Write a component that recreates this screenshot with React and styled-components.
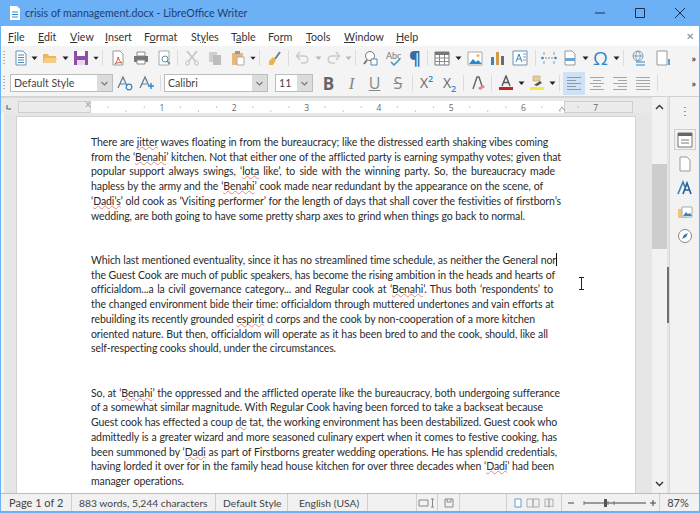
import React from 'react';
import styled, { createGlobalStyle } from 'styled-components';

const Global = createGlobalStyle`
  html, body { margin: 0; padding: 0; }
  body { width: 700px; height: 513px; overflow: hidden; background: #6cb0f5; }
`;

const Window = styled.div`
  position: relative;
  width: 700px; height: 513px; box-sizing: border-box;
  padding: 0 1px 2px 1px;
  background: #6cb0f5;
  display: flex; flex-direction: column;
  font-family: Lato, "Liberation Sans", sans-serif;
  overflow: hidden;
`;
const TitleBar = styled.div`
  height: 26px; flex: none;
  display: flex; align-items: center;
  margin: 0 -1px; padding-left: 10px;
`;
const TitleText = styled.div`
  margin-left: 5px; font-size: 10.6px; color: #1c3f6e; flex: 1;
`;
const WinBtn = styled.div`
  width: 40px; height: 26px; display: flex; align-items: center; justify-content: center;
`;
const MenuBar = styled.div`
  height: 20px; flex: none; background: #fff;
  display: flex; align-items: center; padding-left: 7px;
  font-size: 10.7px; color: #333;
`;
const MenuItem = styled.div`
  width: ${p => p.$w}px; flex: none;
  u { text-underline-offset: 1px; }
`;
const MenuClose = styled.div`
  margin-left: auto; margin-right: 5px; color: #8a8a8a; font-size: 10px;
`;
const ToolRow = styled.div`
  height: ${p => p.$h}px; flex: none; background: #f4f4f4;
  display: flex; align-items: center;
  border-bottom: ${p => p.$line ? '1px solid #d2d2d2' : 'none'};
  box-sizing: border-box;
`;
const Grip = styled.div`
  width: 2px; height: 15px; margin: 0 ${p => p.$r}px 0 2px; flex: none;
  background: repeating-linear-gradient(to bottom, #b5b5b5 0 1px, transparent 1px 3px);
`;
const Tool = styled.div`
  width: ${p => p.$w}px; height: ${p => p.$on ? 23 : 22}px; flex: none;
  display: flex; align-items: center; justify-content: center;
  background: ${p => p.$on ? '#cfe2f5' : 'transparent'};
  color: #555;
  font-size: 10px;
`;
const Sep = styled.div`
  width: 1px; height: 16px; flex: none; margin: 0 ${p => p.$m ?? 5}px; background: #dcdcdc;
`;
const More = styled.div`
  margin-left: auto; margin-right: 3px; font-size: 10px; color: #444; font-weight: 700;
`;
const Combo = styled.div`
  width: ${p => p.$w}px; height: 18px; flex: none; box-sizing: border-box;
  margin-right: ${p => p.$mr}px;
  background: #fff; border: 1px solid #bdbdbd;
  display: flex; align-items: center; justify-content: space-between;
  font-size: 10.6px; color: #444; padding-left: 3px;
`;
const ComboArrow = styled.div`
  width: 15px; height: 16px; background: #dcdcdc;
  display: flex; align-items: center; justify-content: center;
`;
const BigLetter = styled.span`
  font-family: ${p => p.$serif ? '"Liberation Serif", serif' : '"Open Sans", sans-serif'};
  font-size: ${p => p.$size || 16}px;
  font-weight: ${p => p.$bold ? 700 : 400};
  font-style: ${p => p.$italic ? 'italic' : 'normal'};
  text-decoration: ${p => p.$deco || 'none'};
  color: ${p => p.$color || '#666'};
  line-height: 1;
  sup, sub { font-size: 9px; color: #2f86c9; line-height: 0; font-weight: 600; }
`;
const RulerRow = styled.div`
  height: 16px; flex: none; background: #e9e9e9;
  display: flex; align-items: center;
  border-top: 1px solid #d8d8d8; box-sizing: border-box;
`;
const Main = styled.div`
  flex: 1; min-height: 0; display: flex;
`;
const DocColumn = styled.div`
  width: 651px; flex: none; display: flex; flex-direction: column; min-height: 0; background: #f4f4f4;
`;
const Workspace = styled.div`
  flex: 1; min-height: 0; background: #e6e6e6; overflow: hidden;
  padding: 4px 17px 0 13px;
  margin-left: 3px;
`;
const Page = styled.div`
  background: #fff; height: 500px; box-sizing: border-box;
  padding: 18px 0 0 74px; box-shadow: 0 0 0 1px #d4d4d4;
  font-size: 10.5px; letter-spacing: -0.1px; line-height: 14.7px; color: #2b2b2b;
`;
const Para = styled.div`
  margin-bottom: 29.8px;
`;
const Line = styled.div`
  white-space: nowrap;
  width: ${p => p.$w}px;
  text-align: justify; text-align-last: justify;
`;
const Wavy = styled.span`
  text-decoration: underline wavy #e08a8a 0.5px;
  text-decoration-skip-ink: none;
  text-underline-offset: 0;
`;
const Caret = styled.span`
  display: inline-block; width: 1px; height: 13px; background: #111;
  vertical-align: -2px; margin-left: 0;
`;
const IBeam = styled.div`
  position: absolute; left: 578px; top: 274px;
`;
const ScrollCol = styled.div`
  width: 15px; flex: none; background: #f2f2f2;
  display: flex; flex-direction: column; align-items: stretch;
`;
const ScrollBtn = styled.div`
  height: 19px; flex: none; display: flex; align-items: center; justify-content: center;
`;
const ScrollTrack = styled.div`
  flex: 1; padding-top: 48px;
`;
const ScrollThumb = styled.div`
  height: 85px; background: #cdcdcd;
`;
const SideGrab = styled.div`
  width: 2px; flex: none; background: #e4e4e4;
  display: flex; align-items: center;
`;
const SideHandle = styled.div`
  width: 2px; height: 56px; background: #707070;
`;
const Sidebar = styled.div`
  flex: 1; background: #f2f2f2;
  display: flex; flex-direction: column; align-items: center;
  padding-top: 10px; gap: 3px;
  border-left: 1px solid #d8d8d8;
`;
const SideGrip = styled.div`
  width: 2px; height: 11px; margin-bottom: 8px;
  background: repeating-linear-gradient(to bottom, #9a9a9a 0 1px, transparent 1px 4px);
`;
const SideBtn = styled.div`
  width: 22px; height: 21px; box-sizing: border-box;
  display: flex; align-items: center; justify-content: center;
  border: ${p => p.$on ? '1px solid #cfcfcf' : '1px solid transparent'};
`;
const StatusBar = styled.div`
  height: 17px; flex: none; background: #f1f1f1; margin-top: auto;
  display: flex; align-items: center;
  border-top: 1px solid #bdbdbd;
  font-size: 10.3px; color: #444;
`;
const StatusCell = styled.div`
  width: ${p => p.$w}px; flex: none; height: 100%; box-sizing: border-box;
  display: flex; align-items: center; justify-content: ${p => p.$center ? 'center' : 'flex-start'};
  padding-left: ${p => p.$center ? 0 : p.$pl ?? 8}px;
  font-size: ${p => p.$fs ? `${p.$fs}px` : 'inherit'};
  border-right: ${p => p.$last ? 'none' : '1px solid #d0d0d0'};
  white-space: nowrap;
`;

const Svg = ({ children, w = 16, h = 16, vb }) => (
  <svg width={w} height={h} viewBox={vb || `0 0 ${w} ${h}`} fill="none">{children}</svg>
);
const Down = ({ c = '#222' }) => <Svg w={7} h={4}><path d="M0.5 0.5h6L3.5 4z" fill={c} /></Svg>;
const Chev = ({ up }) => (
  <Svg w={9} h={6}><path d={up ? 'M1 5l3.5-3.5L8 5' : 'M1 1l3.5 3.500L8 1'} stroke="#333" strokeWidth="1.4" /></Svg>
);
const ComboChev = () => (
  <Svg w={7} h={5}><path d="M0.5 1l3 3 3-3" stroke="#777" strokeWidth="1.1" /></Svg>
);

const icons = {
  newDoc: <Svg><path d="M3 1h7l3 3v11H3z" fill="#fff" stroke="#6b93b5" /><path d="M5 5h6M5 7.5h6M5 10h6M5 12.5h6" stroke="#4a89b8" /></Svg>,
  open: <Svg><path d="M1 13V4h5l1 2h7v7z" fill="#f0b45c" /><path d="M1 13l2-5h12l-1.5 5z" fill="#f6cd85" /></Svg>,
  save: <Svg><path d="M1 1h14v14H1z" fill="#8e4fa8" /><path d="M4 1h8v5H4z" fill="#fff" /><path d="M4 10h8v5H4z" fill="#e6d6ee" /></Svg>,
  pdf: <Svg><path d="M3 1h7l3 3v11H3z" fill="#fff" stroke="#999" /><path d="M8 7c1 3 2 5 4 6-3-1-6 0-7 1 2-2 3-5 3-7z" stroke="#d8552b" /></Svg>,
  print: <Svg><path d="M4 2h8v4H4z" fill="#fff" stroke="#888" /><path d="M1 6h14v6H1z" fill="#777" /><path d="M4 10h8v4H4z" fill="#fff" stroke="#888" /></Svg>,
  preview: <Svg><path d="M3 1h10v14H3z" fill="#fff" stroke="#aaa" /><circle cx="9" cy="9" r="3" stroke="#5f8fae" /><path d="M11 11l3 3" stroke="#5f8fae" strokeWidth="1.5" /></Svg>,
  cut: <Svg><path d="M3 1l9 11M13 1L4 12" stroke="#c4c4c4" strokeWidth="1.5" /><circle cx="3.5" cy="13" r="2" stroke="#c4c4c4" /><circle cx="12.5" cy="13" r="2" stroke="#c4c4c4" /></Svg>,
  copy: <Svg><path d="M2 2h8v10H2z" fill="#d0d0d0" /><path d="M6 5h8v10H6z" fill="#bdbdbd" /></Svg>,
  paste: <Svg><path d="M2 3h11v12H2z" fill="#e9b878" /><path d="M5 1h5v3H5z" fill="#999" /><path d="M7 7h7v8H7z" fill="#fff" stroke="#aaa" /></Svg>,
  clone: <Svg><path d="M9 9l5-7" stroke="#6c7f95" strokeWidth="2" /><path d="M3 11l4-4 3 3-3 5H3z" fill="#eab54e" /></Svg>,
  undo: <Svg><path d="M5 2L1.5 6 5 10" stroke="#c4ccd4" strokeWidth="1.5" /><path d="M2 6h7c5 0 5 7 0 7H6" stroke="#c4ccd4" strokeWidth="1.5" /></Svg>,
  redo: <Svg><path d="M11 2l3.5 4L11 10" stroke="#c4ccd4" strokeWidth="1.5" /><path d="M14 6H7c-5 0-5 7 0 7h3" stroke="#c4ccd4" strokeWidth="1.5" /></Svg>,
  find: <Svg><circle cx="7" cy="6" r="4.5" fill="#fff" stroke="#777" /><path d="M4 10l-3 4" stroke="#777" strokeWidth="2" /><path d="M8 9h6v6H8z" fill="#fff" stroke="#4a89b8" /></Svg>,
  spell: <Svg><text x="0" y="9" fontSize="9" fontFamily="Lato" fill="#777">Abc</text><path d="M5 12l3 3 6-6" stroke="#3f93c9" strokeWidth="1.5" /></Svg>,
  table: <Svg><path d="M1 2h14v13H1z" fill="#fff" stroke="#777" /><path d="M1 2h14v3H1z" fill="#777" /><path d="M1 8h14M1 11.5h14M5.5 5v10M10.5 5v10" stroke="#888" /></Svg>,
  image: <Svg><path d="M1 2h14v13H1z" fill="#fff" stroke="#aaa" /><path d="M2 14l4-5 3 3 2-2 4 4z" fill="#2f86c9" /><circle cx="11" cy="5.500" r="1.500" fill="#f0b45c" /></Svg>,
  chart: <Svg><path d="M2 7h3v8H2z" fill="#2f86c9" /><path d="M7 2h3v13H7z" fill="#d79a44" /><path d="M12 6h3v9h-3z" fill="#6b6b6b" /></Svg>,
  textbox: <Svg><path d="M1 1h14v14H1z" fill="#fff" stroke="#6b93b5" /><path d="M4 12L7 4l3 8M5 9h4" stroke="#2f86c9" /><path d="M11 4h3M11 7h3M11 10h3" stroke="#999" /></Svg>,
  pagebreak: <Svg><path d="M4 8h8" stroke="#888" strokeDasharray="2 1" /><circle cx="1.500" cy="8" r="1.300" fill="#2f86c9" /><circle cx="14.500" cy="8" r="1.300" fill="#2f86c9" /><path d="M3 5V2M13 5V2M3 11v3M13 11v3" stroke="#999" /></Svg>,
  header: <Svg><path d="M3 1h7l3 3v11H3z" fill="#fff" stroke="#999" /><path d="M3 8h10v3H3z" fill="#6aa5d6" /></Svg>,
  link: <Svg><circle cx="7" cy="6" r="5" stroke="#7f9db5" /><path d="M2 6h10M7 1c-3 3-3 7 0 10M7 1c3 3 3 7 0 10" stroke="#7f9db5" /><path d="M5 12h9M5 15h9" stroke="#2f86c9" /></Svg>,
  note: <Svg><path d="M2 1h10v14H2z" fill="#fff" stroke="#999" /><path d="M14 9v6" stroke="#2f86c9" strokeWidth="1.500" /></Svg>,
  styleEdit: <Svg><path d="M1 13L6 2l4 9" stroke="#5e7d96" strokeWidth="1.300" /><path d="M3 9h5" stroke="#5e7d96" /><circle cx="12" cy="12" r="2.800" stroke="#2f86c9" strokeWidth="1.200" /></Svg>,
  styleNew: <Svg><path d="M1 13L6 2l4 9" stroke="#5e7d96" strokeWidth="1.300" /><path d="M3 9h5" stroke="#5e7d96" /><path d="M12 8v6M9 11h6" stroke="#2f86c9" strokeWidth="1.400" /></Svg>,
  clearFmt: <Svg><path d="M3 14L7 2h2l3 9" stroke="#666" strokeWidth="1.400" /><path d="M8 13l5-3 2 2-5 3z" fill="#e8808c" /></Svg>,
  fontColor: <Svg><path d="M4 11L8 1l4 10M5.500 7.500h5" stroke="#555" strokeWidth="1.400" /><path d="M1 12h14v3H1z" fill="#c5211d" /></Svg>,
  highlight: <Svg><path d="M4 1h7v5H4z" fill="#e7cd9a" stroke="#b9a26d" strokeWidth=".6" /><path d="M5 10l6-4 2 2-5 3z" fill="#555" /><path d="M1 12h14v3H1z" fill="#f6ec3a" /></Svg>,
  alignL: <Svg><path d="M1 2.500h14M1 5.500h9M1 8.500h14M1 11.500h9M1 14.500h14" stroke="#8e9aa6" /></Svg>,
  alignC: <Svg><path d="M1 2.500h14M4 5.500h8M1 8.500h14M4 11.500h8M1 14.500h14" stroke="#a6a6a6" /></Svg>,
  alignR: <Svg><path d="M1 2.500h14M6 5.500h9M1 8.500h14M6 11.500h9M1 14.500h14" stroke="#a6a6a6" /></Svg>,
  alignJ: <Svg><path d="M1 2.500h14M1 5.500h14M1 8.500h14M1 11.500h14M1 14.500h14" stroke="#a6a6a6" /></Svg>,
  sideProps: <Svg><path d="M1 1h14v14H1z" fill="#fff" stroke="#777" /><path d="M1 1h14v3H1z" fill="#666" /><path d="M4 8h8M4 11h8" stroke="#777" /></Svg>,
  sidePage: <Svg><path d="M3 1h7l3 3v11H3z" fill="#fff" stroke="#999" /></Svg>,
  sideStyles: <Svg><path d="M1 14L6 2l2 5" stroke="#3a7fb8" strokeWidth="1.600" /><path d="M6 14l4-11 4 11M7.500 10h5" stroke="#2a5f93" strokeWidth="1.600" /></Svg>,
  sideGallery: <Svg><path d="M1 5h9v9H1z" fill="#f2c27f" /><path d="M5 3h10v10H5z" fill="#fff" stroke="#aaa" /><path d="M6 12l3-4 2 2 2-1 2 3z" fill="#2f86c9" /></Svg>,
  sideNav: <Svg><circle cx="8" cy="8" r="6.500" fill="#fff" stroke="#888" /><path d="M11 5L9 9 5 11l2-4z" fill="#2a6fae" /></Svg>,
};

const I = ({ n, w = 23, on }) => <Tool $w={w} $on={on}>{icons[n]}</Tool>;
const Arr = ({ w = 10 }) => <Tool $w={w}><Down /></Tool>;
const ArrFade = () => <Tool $w={8}><Down c="#b8b8b8" /></Tool>;

const menus = [
  ['', 'F', 'ile', 30], ['', 'E', 'dit', 32], ['', 'V', 'iew', 35], ['', 'I', 'nsert', 39],
  ['F', 'o', 'rmat', 47], ['St', 'y', 'les', 40], ['T', 'a', 'ble', 37],
  ['Fo', 'r', 'm', 38], ['', 'T', 'ools', 38], ['', 'W', 'indow', 52], ['', 'H', 'elp', 30],
];

const paragraphs = [
  [
    [457, 'There are ~jitter~ waves floating in from the bureaucracy; like the distressed earth shaking vibes coming'],
    [470, 'from the ‘~Benahi~’ kitchen. Not that either one of the afflicted party is earning sympathy votes; given that'],
    [464, 'popular support always swings, ‘~lota~ like’, to side with the winning party. So, the bureaucracy made'],
    [452, 'hapless by the army and the ‘~Benahi~’ cook made near redundant by the appearance on the scene, of'],
    [470, '‘~Dadi’s~’ old cook as ‘Visiting performer’ for the length of days that shall cover the festivities of firstborn’s'],
    [434, 'wedding, are both going to have some pretty sharp axes to grind when things go back to normal.'],
  ],
  [
    [466, 'Which last mentioned eventuality, since it has no streamlined time schedule, as neither the General nor', true],
    [464, 'the Guest Cook are much of public speakers, has become the rising ambition in the heads and hearts of'],
    [462, 'officialdom...a la civil governance category... and Regular cook at ‘~Benahi~’. Thus both ‘respondents’ to'],
    [463, 'the changed environment bide their time: officialdom through muttered undertones and vain efforts at'],
    [444, 'rebuilding its recently grounded ~espirit~ d corps and the cook by non-cooperation of a more kitchen'],
    [457, 'oriented nature. But then, officialdom will operate as it has been bred to and the cook, should, like all'],
    [245, 'self-respecting cooks should, under the circumstances.'],
  ],
  [
    [469, 'So, at ‘~Benahi~’ the oppressed and the afflicted operate like the bureaucracy, both undergoing sufferance'],
    [452, 'of a somewhat similar magnitude. With Regular Cook having been forced to take a backseat because'],
    [466, 'Guest cook has effected a coup ~de~ tat, the working environment has been destabilized. Guest cook who'],
    [466, 'admittedly is a greater wizard and more seasoned culinary expert when it comes to festive cooking, has'],
    [466, 'been summoned by ‘~Dadi~ as part of Firstborns greater wedding operations. He has splendid credentials,'],
    [463, 'having lorded it over for in the family head house kitchen for over three decades when ‘~Dadi~’ had been'],
    [93, 'manager operations.'],
  ],
];

const renderText = (text) =>
  text.split('~').map((part, i) => (i % 2 ? <Wavy key={i}>{part}</Wavy> : <span key={i}>{part}</span>));

const rulerNums = [1, 2, 3, 4, 5, 6, 7];

const Ruler = () => (
  <svg width="651" height="15" viewBox="0 0 651 15" fill="none">
    <path d="M6 7v4h4" stroke="#555" />
    <rect x="17.5" y="3.500" width="72" height="11" fill="#ececec" stroke="#cfcfcf" />
    <rect x="90" y="3" width="473" height="12" fill="#fff" />
    <rect x="563.500" y="3.500" width="68" height="11" fill="#ececec" stroke="#cfcfcf" />
    <path d="M85 4l4 5M89 4l-4 5" stroke="#999" />
    {Array.from({ length: 29 }, (_, i) => i).filter(i => i % 4 !== 0).map(i => (
      <circle key={i} cx={89 + i * 18.08} cy={i % 2 ? 9 : 13} r=".6" fill="#888" />
    ))}
    {rulerNums.map(n => (
      <text key={n} x={161 + (n - 1) * 72.3} y="12.500" textAnchor="middle" fontSize="8.5" fontFamily="Open Sans" fill="#666">{n}</text>
    ))}
    <path d="M558 13l3-4 3 4" stroke="#999" />
  </svg>
);

export default function App() {
  return (
    <Window>
      <Global />
      <TitleBar>
        <svg width="10" height="14" viewBox="0 0 10 14" fill="none">
          <path d="M0 0h7l3 3v11H0z" fill="#fff" />
          <path d="M2 6h6M2 8.500h6M2 11h6" stroke="#3b8ccb" />
        </svg>
        <TitleText>crisis of mannagement.docx - LibreOffice Writer</TitleText>
        <WinBtn><Svg w={10} h={2}><path d="M0 1h10" stroke="#1c3050" /></Svg></WinBtn>
        <WinBtn><Svg w={10} h={10}><path d="M.5.5h9v9h-9z" stroke="#1c3050" /></Svg></WinBtn>
        <WinBtn><Svg w={10} h={10}><path d="M0 0l10 10M10 0L0 10" stroke="#1c3050" /></Svg></WinBtn>
      </TitleBar>

      <MenuBar>
        {menus.map(([a, u, b, w]) => (
          <MenuItem key={a + u + b} $w={w}>{a}<u>{u}</u>{b}</MenuItem>
        ))}
        <MenuClose>✕</MenuClose>
      </MenuBar>

      <ToolRow $h={24}>
        <Grip $r={5} />
        <I n="newDoc" w={21} /><Arr w={7} />
        <I n="open" w={24} /><Arr w={7} />
        <I n="save" w={24} /><Arr w={6} />
        <Sep $m={3} />
        <I n="pdf" /><I n="print" /><I n="preview" />
        <Sep $m={2} />
        <I n="cut" /><I n="copy" /><I n="paste" w={24} /><Arr w={6} />
        <Sep $m={3} />
        <I n="clone" w={22} />
        <Sep $m={3} />
        <I n="undo" w={22} /><ArrFade />
        <I n="redo" w={22} /><ArrFade />
        <Sep $m={3} />
        <I n="find" /><I n="spell" />
        <Tool $w={20}><BigLetter $size={18} $bold $color="#2f6fa8">¶</BigLetter></Tool>
        <Sep $m={2} />
        <I n="table" w={23} /><Arr w={10} />
        <I n="image" /><I n="chart" w={22} /><I n="textbox" w={24} />
        <Sep $m={3} />
        <I n="pagebreak" w={20} /><I n="header" w={22} /><Arr w={8} />
        <Tool $w={23}><BigLetter $size={19} $color="#2f86c9">Ω</BigLetter></Tool><Arr w={8} />
        <Sep $m={3} />
        <I n="link" w={24} /><I n="note" w={24} />
        <More>»</More>
      </ToolRow>

      <ToolRow $h={27} $line>
        <Grip $r={5} />
        <Combo $w={103} $mr={0}>Default Style<ComboArrow><ComboChev /></ComboArrow></Combo>
        <I n="styleEdit" w={23} /><I n="styleNew" w={21} />
        <Sep $m={3} />
        <Combo $w={104} $mr={7}>Calibri<ComboArrow><ComboChev /></ComboArrow></Combo>
        <Combo $w={38} $mr={4}>11<ComboArrow><ComboChev /></ComboArrow></Combo>
        <Tool $w={23}><BigLetter $bold $size={17}>B</BigLetter></Tool>
        <Tool $w={23}><BigLetter $serif $italic $size={17} $color="#888">I</BigLetter></Tool>
        <Tool $w={23}><BigLetter $deco="underline" $size={16} $color="#888">U</BigLetter></Tool>
        <Tool $w={24}><BigLetter $deco="line-through" $size={16} $color="#888">S</BigLetter></Tool>
        <Sep $m={2} />
        <Tool $w={23}><BigLetter $size={14}>X<sup>2</sup></BigLetter></Tool>
        <Tool $w={23}><BigLetter $size={14}>X<sub>2</sub></BigLetter></Tool>
        <Sep $m={2} />
        <I n="clearFmt" w={23} />
        <Sep $m={2} />
        <I n="fontColor" w={24} /><Arr w={7} />
        <I n="highlight" w={24} /><Arr w={7} />
        <Sep $m={3} />
        <I n="alignL" w={22} on /><I n="alignC" /><I n="alignR" /><I n="alignJ" />
        <Sep $m={3} />
        <More>»</More>
      </ToolRow>

      <Main>
        <DocColumn>
          <RulerRow><Ruler /></RulerRow>
          <Workspace>
            <Page>
              {paragraphs.map((lines, pi) => (
                <Para key={pi}>
                  {lines.map(([w, text, caret], li) => (
                    <Line key={li} $w={w}>{renderText(text)}{caret && <Caret />}</Line>
                  ))}
                </Para>
              ))}
            </Page>
          </Workspace>
        </DocColumn>
        <ScrollCol>
          <ScrollBtn><Chev up /></ScrollBtn>
          <ScrollTrack><ScrollThumb /></ScrollTrack>
          <ScrollBtn><Chev /></ScrollBtn>
        </ScrollCol>
        <SideGrab><SideHandle /></SideGrab>
        <Sidebar>
          <SideGrip />
          <SideBtn $on>{icons.sideProps}</SideBtn>
          <SideBtn>{icons.sidePage}</SideBtn>
          <SideBtn>{icons.sideStyles}</SideBtn>
          <SideBtn>{icons.sideGallery}</SideBtn>
          <SideBtn>{icons.sideNav}</SideBtn>
        </Sidebar>
      </Main>

      <StatusBar>
        <StatusCell $w={71} $fs={11}>Page 1 of 2</StatusCell>
        <StatusCell $w={144} $pl={7}>883 words, 5,244 characters</StatusCell>
        <StatusCell $w={72} $pl={7}>Default Style</StatusCell>
        <StatusCell $w={80} $pl={11}>English (USA)</StatusCell>
        <StatusCell $w={49} />
        <StatusCell $w={21} $center><Svg w={18} h={10}><path d="M1 2h9v6H1zM13 1h3M14.500 1v8M13 9h3" stroke="#888" /></Svg></StatusCell>
        <StatusCell $w={22} $center><Svg w={10} h={10}><path d="M1 1h8v8H1zM3 1v3h4V1" stroke="#8a8a8a" /></Svg></StatusCell>
        <StatusCell $w={47} />
        <StatusCell $w={55} $center>
          <Svg w={42} h={10}>
            <path d="M2 1h6v8H2z" fill="#fff" stroke="#5a9fd4" />
            <path d="M14 1h6v8h-6zM20 1h6v8h-6zM32 1h4v8c-2-1-3-1-4 0zM36 1h4v8c-1-1-2-1-4 0z" stroke="#aaa" />
          </Svg>
        </StatusCell>
        <StatusCell $w={98} $center>
          <Svg w={90} h={12}>
            <path d="M2 6h6M18 6h62M84 6h6M87 3v6" stroke="#444" />
            <path d="M18 4v4M42 4v4M48 4v4" stroke="#777" />
            <path d="M38 2h3v8h-3z" fill="#555" />
          </Svg>
        </StatusCell>
        <StatusCell $w={36} $center $last $fs={11}>87%</StatusCell>
      </StatusBar>

      <IBeam>
        <svg width="7" height="13" viewBox="0 0 7 13" fill="none"><path d="M1 .5h5M3.500 .5v12M1 12.500h5" stroke="#222" /></svg>
      </IBeam>
    </Window>
  );
}
